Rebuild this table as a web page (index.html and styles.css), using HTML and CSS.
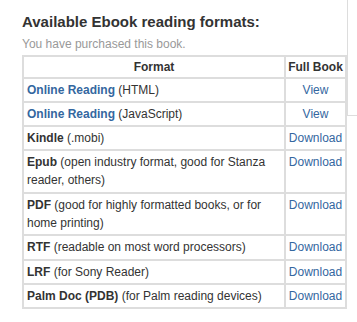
FILE: index.html
```html
<!DOCTYPE html>
<html>
<head>
<meta charset="utf-8">
<link rel="stylesheet" href="styles.css">
</head>
<body>
<div class="page">
  <div class="main">
    <h2 class="title">Available Ebook reading formats:</h2>
    <p class="note">You have purchased this book.</p>
    <table class="formats">
      <thead>
        <tr><th class="fmt">Format</th><th class="full">Full Book</th></tr>
      </thead>
      <tbody>
        <tr><td><a class="link strong" href="#">Online Reading</a> (HTML)</td><td class="act"><a class="link" href="#">View</a></td></tr>
        <tr><td><a class="link strong" href="#">Online Reading</a> (JavaScript)</td><td class="act"><a class="link" href="#">View</a></td></tr>
        <tr><td><b>Kindle</b> (.mobi)</td><td class="act"><a class="link" href="#">Download</a></td></tr>
        <tr class="tall"><td><b>Epub</b> (open industry format, good for Stanza reader, others)</td><td class="act"><a class="link" href="#">Download</a></td></tr>
        <tr><td><b>PDF</b> (good for highly formatted books, or for home printing)</td><td class="act"><a class="link" href="#">Download</a></td></tr>
        <tr class="tall"><td><b>RTF</b> (readable on most word processors)</td><td class="act"><a class="link" href="#">Download</a></td></tr>
        <tr><td><b>LRF</b> (for Sony Reader)</td><td class="act"><a class="link" href="#">Download</a></td></tr>
        <tr><td><b>Palm Doc (PDB)</b> (for Palm reading devices)</td><td class="act"><a class="link" href="#">Download</a></td></tr>
      </tbody>
    </table>
  </div>
  <div class="side"></div>
</div>
</body>
</html>
```
FILE: styles.css
```css
html, body {
  margin: 0;
  padding: 0;
  background: #fff;
}
body {
  font-family: "Liberation Sans", Arial, sans-serif;
  font-size: 12px;
  color: #333;
}
.page {
  display: flex;
  align-items: flex-start;
  padding-left: 22px;
}
.main {
  width: 325px;
  flex: none;
}
.side {
  flex: 1;
  height: 115px;
  border-left: 1px solid #ddd;
  border-bottom: 1px solid #ddd;
}
.title {
  margin: 0;
  padding-top: 13px;
  font-size: 15px;
  line-height: 18px;
  font-weight: bold;
  color: #333;
}
.note {
  margin: 0;
  padding-top: 4px;
  font-size: 12px;
  line-height: 18px;
  color: #999;
}
.formats {
  width: 325px;
  border: 1px solid #ddd;
  border-spacing: 0;
  border-collapse: separate;
  margin-top: 2px;
}
.formats th,
.formats td {
  border: 1px solid #ddd;
  padding: 2px 2px;
  line-height: 18px;
  vertical-align: top;
  text-align: left;
}
.formats th {
  padding: 1px 2px;
  text-align: center;
  font-weight: bold;
}
.formats th.full {
  width: 55px;
}
.formats td.act {
  text-align: center;
}
.formats td:first-child {
  padding-left: 3px;
}
.formats tr.tall td {
  padding-bottom: 3px;
}
.link {
  color: #34679f;
  text-decoration: none;
}
.strong {
  font-weight: bold;
}
b {
  font-weight: bold;
}
```
